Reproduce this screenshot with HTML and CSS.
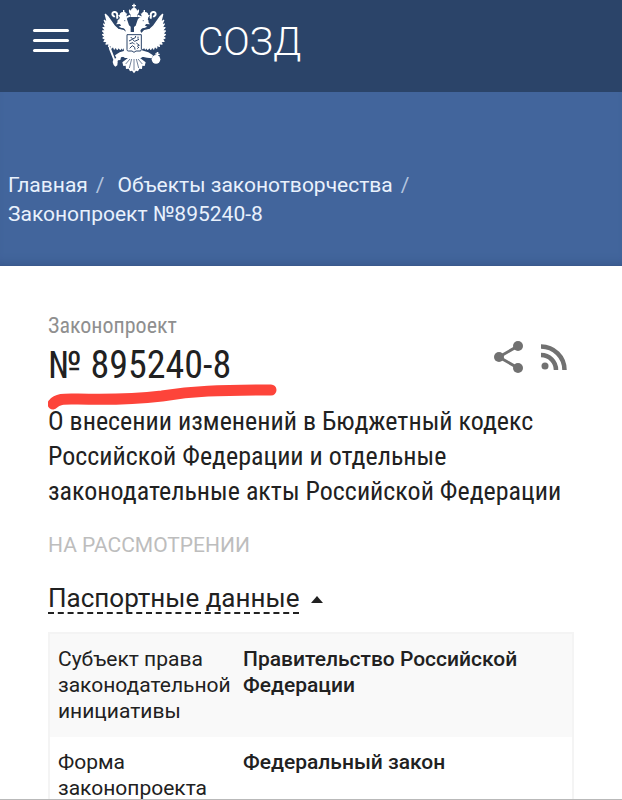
FILE: index.html
```html
<!DOCTYPE html>
<html lang="ru">
<head>
<meta charset="utf-8">
<meta name="viewport" content="width=device-width, initial-scale=1">
<title>СОЗД — Законопроект № 895240-8</title>
<link rel="stylesheet" href="styles.css">
</head>
<body>
<header class="topbar">
  <button class="menu" type="button" aria-label="Меню">
    <span class="menu-line"></span><span class="menu-line"></span><span class="menu-line"></span>
  </button>
  <a class="brand" href="#">
    <svg class="emblem" viewBox="0 0 240 240" aria-hidden="true">
      <g fill="#fff">
        <!-- central crown -->
        <path d="M115 11h4v4h4v4h-4v5c5 1 7 4 7 8l5-4c3 5 1 12-4 16v7h-20v-7c-5-4-7-11-4-16l5 4c0-4 2-7 7-8v-5h-4v-4h4z"/>
        <!-- side crowns and ribbons -->
        <path d="M84 30h4v5c4 1 5 4 5 6l4-2-3 9 3 8-21 4-2-8-5-6 5-1c0-5 3-8 10-9z"/>
        <path d="M150 30h-4v5c-4 1-5 4-5 6l-4-2 3 9-3 8 21 4 2-8 5-6-5-1c0-5-3-8-10-9z"/>
        <path fill="none" stroke="#fff" stroke-width="6" d="M106 47c-5 1-7 4-12 5M128 47c5 1 7 4 12 5M68 56c-4-6 1-13-3-17-4-5-13-4-13 3 0 6 6 5 6 10M166 56c4-6-1-13 3-17 4-5 13-4 13 3 0 6-6 5-6 10"/>
        <!-- heads, necks and body -->
        <path d="M75 56l-7 4-1 8-4 5 12-1 3 5-7 3 9 4c7-1 11 4 12 9l-5 8-7-6-13-3-9 4 1 12 17 11 10 15 1 24-7 9 10 7 24 0 24 0 10-7-7-9 1-24 10-15 17-11 1-12-9-4-13 3-7 6-5-8c1-5 5-10 12-9l9-4-7-3 3-5 12 1-4-5-1-8-7-4c-10-6-22-5-25 3l-6 18-5 4v15h-10V80l-5-4-6-18c-3-8-14-9-24-2z"/>
        <!-- wings -->
        <g stroke="#fff" stroke-width="4" stroke-linejoin="round">
          <path d="M31 43l9 9 9 13 10 14 10 9 17 4 11 12 0 42-7-1-4-4-3 6-5-6-2 7-6-7-3 7-5-8-4 7-3-9-6 6 0-9-8 4 2-8-10 1 4-7-10-1 5-6-8-4 7-4-8-6 8-3-8-8 9-1-8-9 9 1-7-12 8 3-6-14 9 7z"/>
          <path d="M203 43l-9 9-9 13-10 14-10 9-17 4-11 12 0 42 7-1 4-4 3 6 5-6 2 7 6-7 3 7 5-8 4 7 3-9 6 6 0-9 8 4-2-8 10 1-4-7 10-1-5-6 8-4-7-4 8-6-8-3 8-8-9-1 8-9-9 1 7-12-8 3 6-14-9 7z"/>
        </g>
        <!-- legs, sceptre and orb -->
        <path d="M94 151l-20 6-14 9 4 8-7 3 5 5-3 7 7-1 3-7 7-1 2-8 18-4 9-10zM140 151l20 6 14 9-4 9-14-2-14-3-9-10z"/>
        <path d="M41 139l5 1 14 37 8 9-1 10-6 4-5-5-3-9 2-7-13-32z"/>
        <circle cx="183" cy="178" r="13"/>
        <path d="M185 156h5v5h4v4h-4l-2 7-6-3 3-5h-4v-4h4z"/>
        <!-- tail -->
        <path d="M103 156h28l5 19 16 12-3 11-7-1-1 10-8-1-4 8-6-2-6 8-6-8-6 2-4-8-8 1-1-10-7 1-3-11 16-12z"/>
      </g>
      <g fill="none" stroke="#2b4469" stroke-width="2">
        <path d="M117 177v34M110 177l-7 27M124 177l7 27M105 177l-13 15M129 177l13 15"/>
        <path d="M96 104h43v45q0 4-4 4h-12l-6 4-6-4h-11q-4 0-4-4z" stroke-width="3"/>
        <path d="M107 111l6 6 8-4 1-5M102 123l10-5 7 6 13-6M104 131l10-3 5 5M104 145l8-8 7 5 1 7M124 129l9 7-7 3M127 146l5-5M129 110v6" stroke-width="3"/>
        <path d="M87 62h4M143 62h4"/>
      </g>
    </svg>
    <span class="brand-name">СОЗД</span>
  </a>
</header>
<nav class="hero" aria-label="Навигация">
  <ol class="crumbs">
    <li class="crumb"><a href="#">Главная</a></li>
    <li class="crumb"><a href="#">Объекты законотворчества</a></li>
    <li class="crumb" aria-current="page">Законопроект №895240-8</li>
  </ol>
</nav>
<main class="bill">
  <div class="bill-head">
    <div class="bill-id">
      <p class="kind">Законопроект</p>
      <h1 class="number">№ 895240-8</h1>
      <svg class="marker" viewBox="0 0 230 26" aria-hidden="true"><path d="M5 20C10 14 18 15 30 15C65 16 88 15 114 12C145 7 169 6 223 6" fill="none" stroke="#fd443a" stroke-width="11" stroke-linecap="round" stroke-linejoin="round"/></svg>
    </div>
    <div class="actions">
      <button class="action" type="button" aria-label="Поделиться">
        <svg class="icon" viewBox="0 0 30 34" aria-hidden="true"><path d="M24 6L5 17l19 11" fill="none" stroke="#717171" stroke-width="3"/><g fill="#717171"><circle cx="24" cy="6" r="5"/><circle cx="5" cy="17" r="5"/><circle cx="24" cy="28" r="5"/></g></svg>
      </button>
      <a class="action" href="#" aria-label="RSS">
        <svg class="icon icon-rss" viewBox="0 0 26 26" aria-hidden="true"><circle cx="4" cy="22" r="3.500" fill="#717171"/><path d="M0 2.500A23.500 23.500 0 0 1 23.500 26M0 11A15 15 0 0 1 15 26" fill="none" stroke="#717171" stroke-width="4.500"/></svg>
      </a>
    </div>
  </div>
  <p class="title">О внесении изменений в Бюджетный кодекс Российской Федерации и отдельные законодательные акты Российской Федерации</p>
  <p class="status">НА РАССМОТРЕНИИ</p>
  <h2 class="section"><button class="toggle" type="button" aria-expanded="true"><span class="toggle-text">Паспортные данные</span><svg class="caret" viewBox="0 0 12 7" aria-hidden="true"><path d="M0 7L6 0l6 7z" fill="#212121"/></svg></button></h2>
  <table class="passport">
    <tbody>
      <tr><th scope="row">Субъект права законодательной инициативы</th><td>Правительство Российской Федерации</td></tr>
      <tr><th scope="row">Форма законопроекта</th><td>Федеральный закон</td></tr>
    </tbody>
  </table>
</main>
</body>
</html>
```
FILE: styles.css
```css
* { box-sizing: border-box; }

body {
  margin: 0;
  background: #fff;
  color: #212121;
  font-family: Roboto, "Liberation Sans", sans-serif;
  font-size: 21px;
}

body::after {
  content: "";
  position: fixed;
  right: 0;
  bottom: 0;
  left: 0;
  height: 1px;
  background: #b9b9b9;
}

h1, h2, p, ol { margin: 0; padding: 0; font-weight: 400; }
a { color: inherit; text-decoration: none; }
button { padding: 0; border: 0; background: none; color: inherit; font: inherit; cursor: pointer; }

.topbar {
  display: flex;
  align-items: flex-start;
  gap: 26px;
  height: 92px;
  padding: 0 33px;
  background: #2b4469;
  color: #fff;
}

.menu { display: grid; gap: 7px; width: 36px; margin-top: 29px; }
.menu-line { height: 3px; border-radius: 2px; background: #fff; }
.brand { display: flex; align-items: flex-start; gap: 23px; }
.emblem { display: block; width: 80px; height: 80px; }
.brand-name { font-size: 39px; font-weight: 300; line-height: 84px; }

.hero {
  min-height: 174px;
  padding: 79px 8px 36px;
  border-bottom: 1px solid #3a598d;
  background: #42659c;
  box-shadow: inset 0 -8px 8px -6px #38588d;
  color: #e9f1fc;
}

.crumbs { display: flex; flex-wrap: wrap; list-style: none; line-height: 29px; }
.crumb:not(:last-child)::after { content: "/"; padding: 0 13px 0 8px; color: #b2c4df; }

.bill { padding: 45px 48px 0; }
.bill-head { display: flex; justify-content: space-between; }
.bill-id { position: relative; }
.kind { color: #8f8f8f; font-size: 22px; line-height: 30px; }
.number { font-size: 38px; line-height: 48px; }
.kind, .number, .title { font-family: "Roboto Condensed", Roboto, "Liberation Sans", sans-serif; }
.marker { position: absolute; top: 73px; left: 0; width: 230px; height: 26px; }
.actions { display: flex; align-items: center; gap: 17px; padding: 14px 7px 0 0; }
.action { display: block; line-height: 0; }
.icon { display: block; width: 30px; height: 34px; }
.icon-rss { width: 26px; height: 26px; }

.title { padding-top: 15px; font-size: 26px; line-height: 35px; }
.status { padding-top: 22px; color: #bdbdbd; line-height: 28px; }
.section { padding-top: 25px; font-size: 26px; line-height: 28px; }
.toggle { display: flex; align-items: center; gap: 12px; }
.toggle-text { border-bottom: 2px dashed #212121; }
.caret { width: 12px; height: 7px; }

.passport {
  width: 100%;
  margin-top: 18px;
  border: 2px solid #f4f4f4;
  border-collapse: collapse;
  line-height: 26px;
  text-align: left;
}

.passport tr:nth-child(odd) { background: #f9f9f9; }
.passport th { width: 186px; padding: 12px 0 13px 8px; font-weight: 400; vertical-align: top; }
.passport td { padding: 12px 40px 13px 8px; font-weight: 500; vertical-align: top; }
```
